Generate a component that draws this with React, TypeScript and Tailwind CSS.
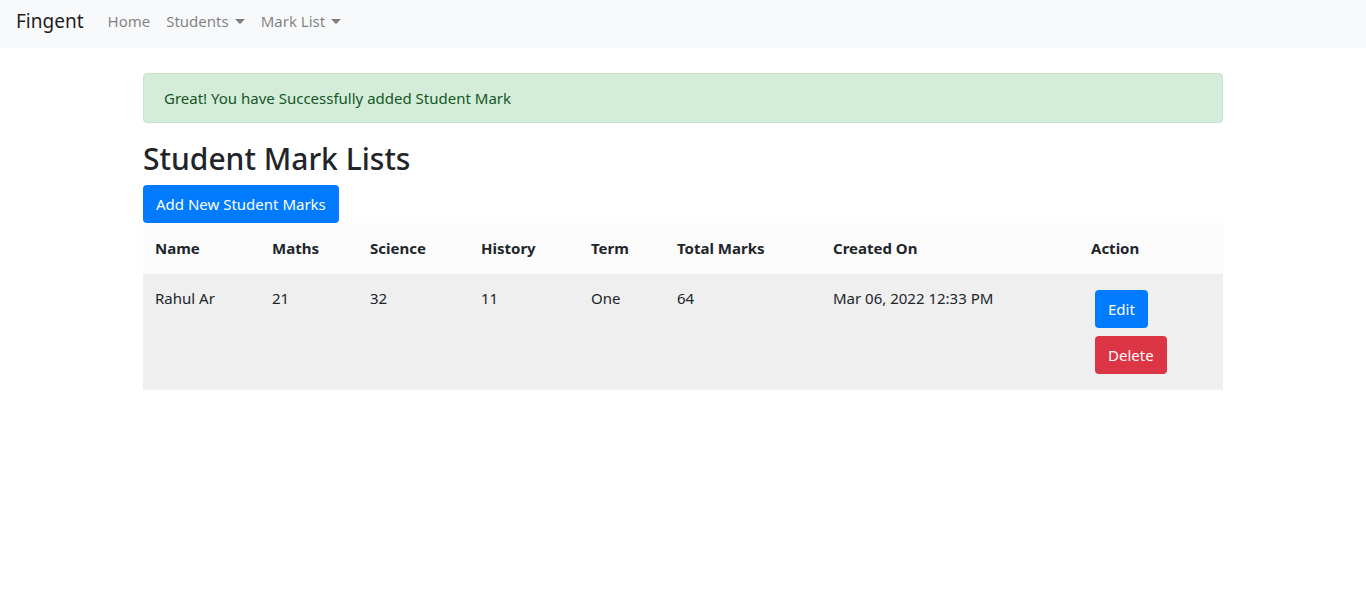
import React from "react";

const font = { fontFamily: '"Segoe UI", "Noto Sans", "Liberation Sans", sans-serif' };

type MarkRow = {
  name: string;
  maths: number;
  science: number;
  history: number;
  term: string;
  total: number;
  createdOn: string;
};

const rows: MarkRow[] = [
  {
    name: "Rahul Ar",
    maths: 21,
    science: 32,
    history: 11,
    term: "One",
    total: 64,
    createdOn: "Mar 06, 2022 12:33 PM",
  },
];

const Caret = () => (
  <span className="ml-[6px] inline-block h-0 w-0 border-x-[5px] border-t-[5px] border-x-transparent border-t-current align-[3px]" />
);

function Navbar() {
  return (
    <nav className="flex h-12 items-start bg-[#f8f9fa] px-4 pt-[9px]">
      <a className="mr-4 text-[19px] leading-6 text-black/90">Fingent</a>
      <ul className="flex items-center text-black/50">
        <li className="px-2">Home</li>
        <li className="px-2">
          Students
          <Caret />
        </li>
        <li className="px-2">
          Mark List
          <Caret />
        </li>
      </ul>
    </nav>
  );
}

export default function App() {
  const headers = [
    { label: "Name", w: "w-[117px]" },
    { label: "Maths", w: "w-[98px]" },
    { label: "Science", w: "w-[111px]" },
    { label: "History", w: "w-[110px]" },
    { label: "Term", w: "w-[86px]" },
    { label: "Total Marks", w: "w-[156px]" },
    { label: "Created On", w: "w-[258px]" },
    { label: "Action", w: "w-[144px]" },
  ];

  return (
    <div className="min-h-screen bg-white text-[15px] leading-6 text-[#212529]" style={font}>
      <Navbar />
      <main className="mx-auto w-[1080px] pt-[25px]">
        <div className="mb-4 rounded border border-[#c3e6cb] bg-[#d4edda] px-5 py-3 text-[#155724]">
          Great! You have Successfully added Student Mark
        </div>
        <h2 className="mb-2 pt-px text-[30px] font-medium leading-[37px]">Student Mark Lists</h2>
        <button className="rounded border border-transparent bg-[#007bff] px-3 py-[6px] text-white">
          Add New Student Marks
        </button>
        <table className="w-full table-fixed border-collapse">
          <thead>
            <tr className="bg-[#fcfcfc]">
              {headers.map((h) => (
                <th key={h.label} className={`${h.w} px-3 pb-[14px] pt-[13px] text-left font-bold`}>
                  {h.label}
                </th>
              ))}
            </tr>
          </thead>
          <tbody>
            {rows.map((r) => (
              <tr key={r.name} className="bg-[#efefef] align-top">
                <td className="p-3">{r.name}</td>
                <td className="p-3">{r.maths}</td>
                <td className="p-3">{r.science}</td>
                <td className="p-3">{r.history}</td>
                <td className="p-3">{r.term}</td>
                <td className="p-3">{r.total}</td>
                <td className="p-3">{r.createdOn}</td>
                <td className="p-3">
                  <div className="flex flex-col items-start gap-2 p-1">
                    <button className="rounded border border-transparent bg-[#007bff] px-3 py-[6px] text-white">
                      Edit
                    </button>
                    <button className="rounded border border-transparent bg-[#dc3545] px-3 py-[6px] text-white">
                      Delete
                    </button>
                  </div>
                </td>
              </tr>
            ))}
          </tbody>
        </table>
      </main>
    </div>
  );
}
